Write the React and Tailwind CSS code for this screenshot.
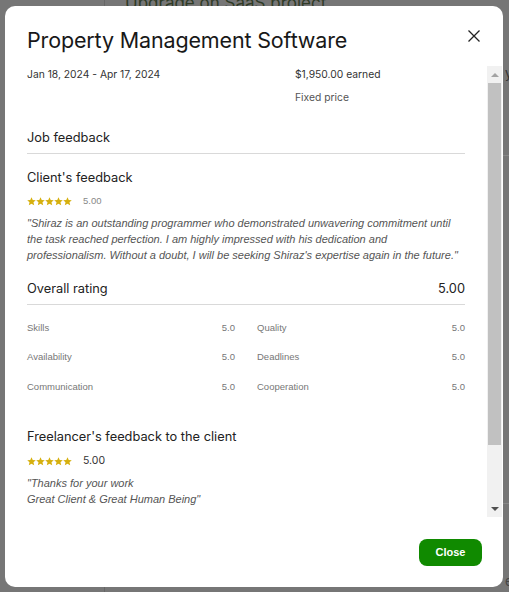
import React from "react";

const Star = () => (
  <svg width="9" height="9" viewBox="0 0 24 24" className="block">
    <path d="M12 0.8l3.3 7.4 8.1.7-6.1 5.4 1.9 7.9L12 17.9l-7.2 4.3 1.9-7.9L0.6 8.9l8.1-.7z" fill="#d6b00e" />
  </svg>
);

const Stars = () => (
  <div className="flex gap-0">
    <Star /><Star /><Star /><Star /><Star />
  </div>
);

const Row = ({ label, value }) => (
  <div className="flex justify-between h-[16px] items-center">
    <span>{label}</span>
    <span>{value}</span>
  </div>
);

const arial = { fontFamily: "'Liberation Sans', Arial, sans-serif" };

export default function App() {
  return (
    <div className="relative w-[509px] h-[592px] overflow-hidden bg-[#767676]" style={{ fontFamily: "Inter, 'Liberation Sans', sans-serif" }}>
      {/* background page */}
      <div className="flex h-full">
        <div className="w-[105px] border-r border-[#666]"></div>
        <div className="flex-1 relative">
          <div className="pl-[20px] mt-[-9px] text-[17px] text-[#2f3b26]">Upgrade on SaaS project</div>
        </div>
      </div>
      <div className="absolute right-0 top-[64px] text-[13px] text-[#333] w-[4px] overflow-hidden">y</div>
      <div className="absolute right-0 top-[155px] w-[6px] border-t border-[#888]"></div>
      <div className="absolute right-0 top-[503px] w-[6px] border-t border-[#888]"></div>
      <div className="absolute right-0 top-[572px] text-[13px] text-[#444] w-[4px] overflow-hidden">e</div>

      {/* modal */}
      <div className="absolute left-[5px] top-[6px] w-[498px] h-[581px] bg-white rounded-[10px] flex flex-col">
        <div className="h-[60px] flex justify-between items-start pl-[22px] pr-[22px] pt-[20px]">
          <h1 className="text-[21.5px] leading-[28px] text-[#181818] tracking-[-0.15px]">Property Management Software</h1>
          <svg width="14" height="14" viewBox="0 0 14 14" className="mt-[3px]">
            <path d="M1.5 1.5L12.5 12.5M12.5 1.5L1.5 12.5" stroke="#222" strokeWidth="1.3" />
          </svg>
        </div>

        <div className="h-[451px] flex">
          <div className="flex-1 pl-[22px] pr-[22px] overflow-hidden">
            <div className="flex text-[10.3px] leading-[16px] text-[#333]">
              <div className="w-[268px]">Jan 18, 2024 - Apr 17, 2024</div>
              <div>
                <div>$1,950.00 earned</div>
                <div className="mt-[7px] text-[#555]">Fixed price</div>
              </div>
            </div>
            <div className="mt-[23px] text-[12.8px] leading-[20px] text-[#222]">Job feedback</div>
            <div className="mt-[5px] border-t border-[#d9d9d9]"></div>
            <div className="mt-[14px] text-[12.8px] leading-[20px] text-[#222]">Client's feedback</div>
            <div className="mt-[5px] flex items-center gap-[11px] h-[16px]">
              <Stars />
              <span className="text-[9.5px] text-[#888]" style={arial}>5.00</span>
            </div>
            <p className="mt-[6px] text-[11px] leading-[16px] italic text-[#555]" style={arial}>
              "Shiraz is an outstanding programmer who demonstrated unwavering commitment until the task reached perfection. I am highly impressed with his dedication and professionalism. Without a doubt, I will be seeking Shiraz's expertise again in the future."
            </p>
            <div className="mt-[16px] flex justify-between text-[12.8px] leading-[20px] text-[#222]">
              <span>Overall rating</span>
              <span>5.00</span>
            </div>
            <div className="mt-[5px] border-t border-[#d9d9d9]"></div>
            <div className="mt-[15px] grid grid-cols-2 gap-x-[22px] gap-y-[13.5px] text-[9.5px] text-[#777]" style={arial}>
              <Row label="Skills" value="5.0" />
              <Row label="Quality" value="5.0" />
              <Row label="Availability" value="5.0" />
              <Row label="Deadlines" value="5.0" />
              <Row label="Communication" value="5.0" />
              <Row label="Cooperation" value="5.0" />
            </div>
            <div className="mt-[32px] text-[12.8px] leading-[20px] text-[#222]">Freelancer's feedback to the client</div>
            <div className="mt-[6px] flex items-center gap-[11px] h-[16px]">
              <Stars />
              <span className="text-[10.5px] text-[#333]">5.00</span>
            </div>
            <p className="mt-[6px] text-[11px] leading-[16px] italic text-[#555]" style={arial}>
              "Thanks for your work<br />Great Client &amp; Great Human Being"
            </p>
          </div>
          {/* scrollbar */}
          <div className="w-[15px] mr-[1px] bg-[#f1f1f1] flex flex-col items-stretch">
            <div className="h-[17px] flex items-center justify-center">
              <div className="w-0 h-0 border-l-[4px] border-r-[4px] border-b-[4px] border-l-transparent border-r-transparent border-b-[#a3a3a3]"></div>
            </div>
            <div className="mx-[1px] h-[362px] bg-[#c1c1c1]"></div>
            <div className="flex-1"></div>
            <div className="h-[17px] flex items-center justify-center">
              <div className="w-0 h-0 border-l-[4px] border-r-[4px] border-t-[4px] border-l-transparent border-r-transparent border-t-[#505050]"></div>
            </div>
          </div>
        </div>

        <div className="flex-1 flex justify-end items-start pt-[22px] pr-[21px]">
          <button className="w-[63px] h-[27px] rounded-[8px] bg-[#108a00] text-white text-[11px] font-bold" style={arial}>
            Close
          </button>
        </div>
      </div>
    </div>
  );
}
